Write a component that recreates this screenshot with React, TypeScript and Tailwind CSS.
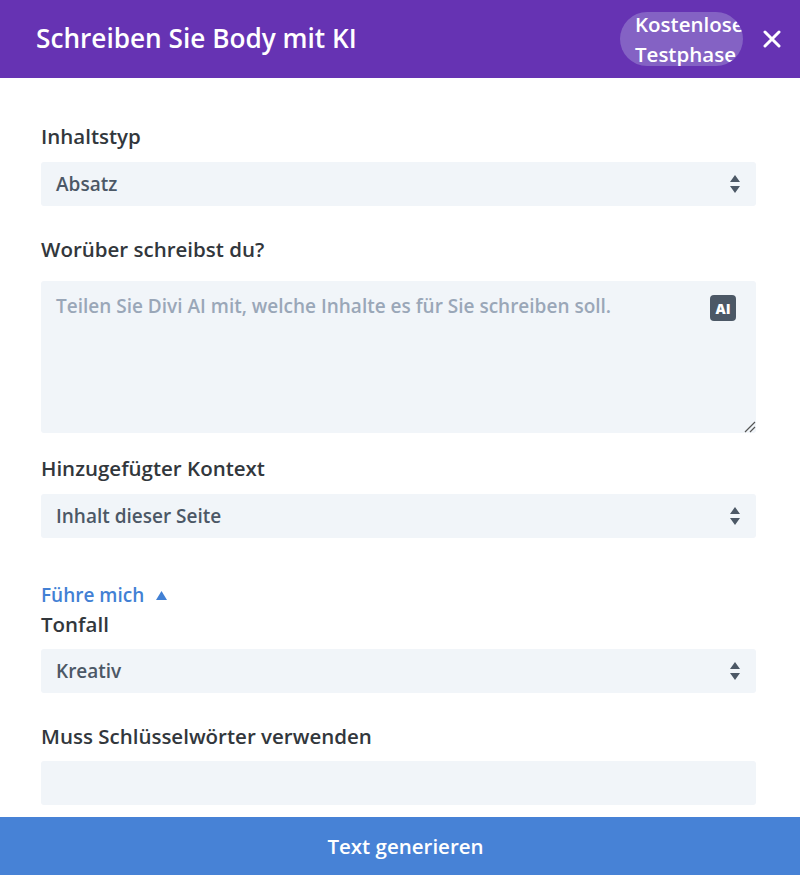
const font = "[font-family:'Open_Sans',sans-serif]";

const SelectArrows = () => (
  <svg width="10" height="18" viewBox="0 0 10 18" className="shrink-0">
    <path d="M5 0 L10 7 L0 7 Z M0 11 L10 11 L5 18 Z" fill="#4c5866" />
  </svg>
);

const Label = ({ children }: { children: React.ReactNode }) => (
  <div className="text-[20.5px] leading-[24px] font-semibold text-[#32373c]">{children}</div>
);

const Select = ({ value, className }: { value: string; className: string }) => (
  <div className={`${className} flex h-[44px] items-center justify-between rounded-[3px] bg-[#f1f5f9] pr-[16px] pl-[15px]`}>
    <span className="text-[19px] font-semibold text-[#4c5866]">{value}</span>
    <SelectArrows />
  </div>
);

export default function App() {
  return (
    <div className={`${font} flex h-[875px] w-[800px] flex-col overflow-hidden bg-white`}>
      <header className="flex h-[78px] shrink-0 items-center justify-between bg-[#6633b3] pr-[19px] pl-[36px]">
        <h1 className="text-[26.2px] font-semibold text-white">Schreiben Sie Body mit KI</h1>
        <div className="flex items-center gap-[20px]">
          <div className="h-[54px] w-[123px] overflow-hidden rounded-[27px] bg-[#8462c4] pl-[15px] text-[20.5px] leading-[30px] font-semibold whitespace-nowrap text-white">
            <div className="-mt-[3px]">Kostenlose</div>
            <div>Testphase</div>
          </div>
          <svg width="18" height="18" viewBox="0 0 18 18" className="shrink-0">
            <path d="M2 2 L16 16 M16 2 L2 16" stroke="#fff" strokeWidth="3" strokeLinecap="round" />
          </svg>
        </div>
      </header>

      <main className="flex-1 px-[41px] pt-[46px] pr-[44px]">
        <Label>Inhaltstyp</Label>
        <Select value="Absatz" className="mt-[14px]" />

        <div className="mt-[31px]">
          <Label>Worüber schreibst du?</Label>
        </div>
        <div className="relative mt-[20px] h-[152px] rounded-[3px] bg-[#f1f5f9] px-[15px] pt-[11px]">
          <span className="text-[19px] font-semibold text-[#9aa7b8]">
            Teilen Sie Divi AI mit, welche Inhalte es für Sie schreiben soll.
          </span>
          <div className="absolute top-[14px] right-[20px] flex h-[26px] w-[26px] items-center justify-center rounded-[4px] bg-[#4c5866] text-[14px] font-extrabold text-white">
            AI
          </div>
          <svg width="12" height="12" viewBox="0 0 12 12" className="absolute right-0 bottom-0">
            <path d="M1 11 L11 1 M6 11 L11 6" stroke="#555" strokeWidth="1.2" />
          </svg>
        </div>

        <div className="mt-[23px]">
          <Label>Hinzugefügter Kontext</Label>
        </div>
        <Select value="Inhalt dieser Seite" className="mt-[14px]" />

        <div className="mt-[44px] flex items-center gap-[12px] text-[19px] leading-[26px] font-semibold text-[#4280d4]">
          Führe mich
          <svg width="11" height="9" viewBox="0 0 11 9">
            <path d="M5.5 0 L11 9 L0 9 Z" fill="#4280d4" />
          </svg>
        </div>
        <div className="mt-[4px]">
          <Label>Tonfall</Label>
        </div>
        <Select value="Kreativ" className="mt-[13px]" />

        <div className="mt-[31px]">
          <Label>Muss Schlüsselwörter verwenden</Label>
        </div>
        <div className="mt-[13px] h-[44px] rounded-[3px] bg-[#f1f5f9]" />
      </main>

      <button className="flex h-[58px] shrink-0 items-center justify-center bg-[#4782d6] pl-[11px] text-[20.5px] font-semibold text-white">
        Text generieren
      </button>
    </div>
  );
}
